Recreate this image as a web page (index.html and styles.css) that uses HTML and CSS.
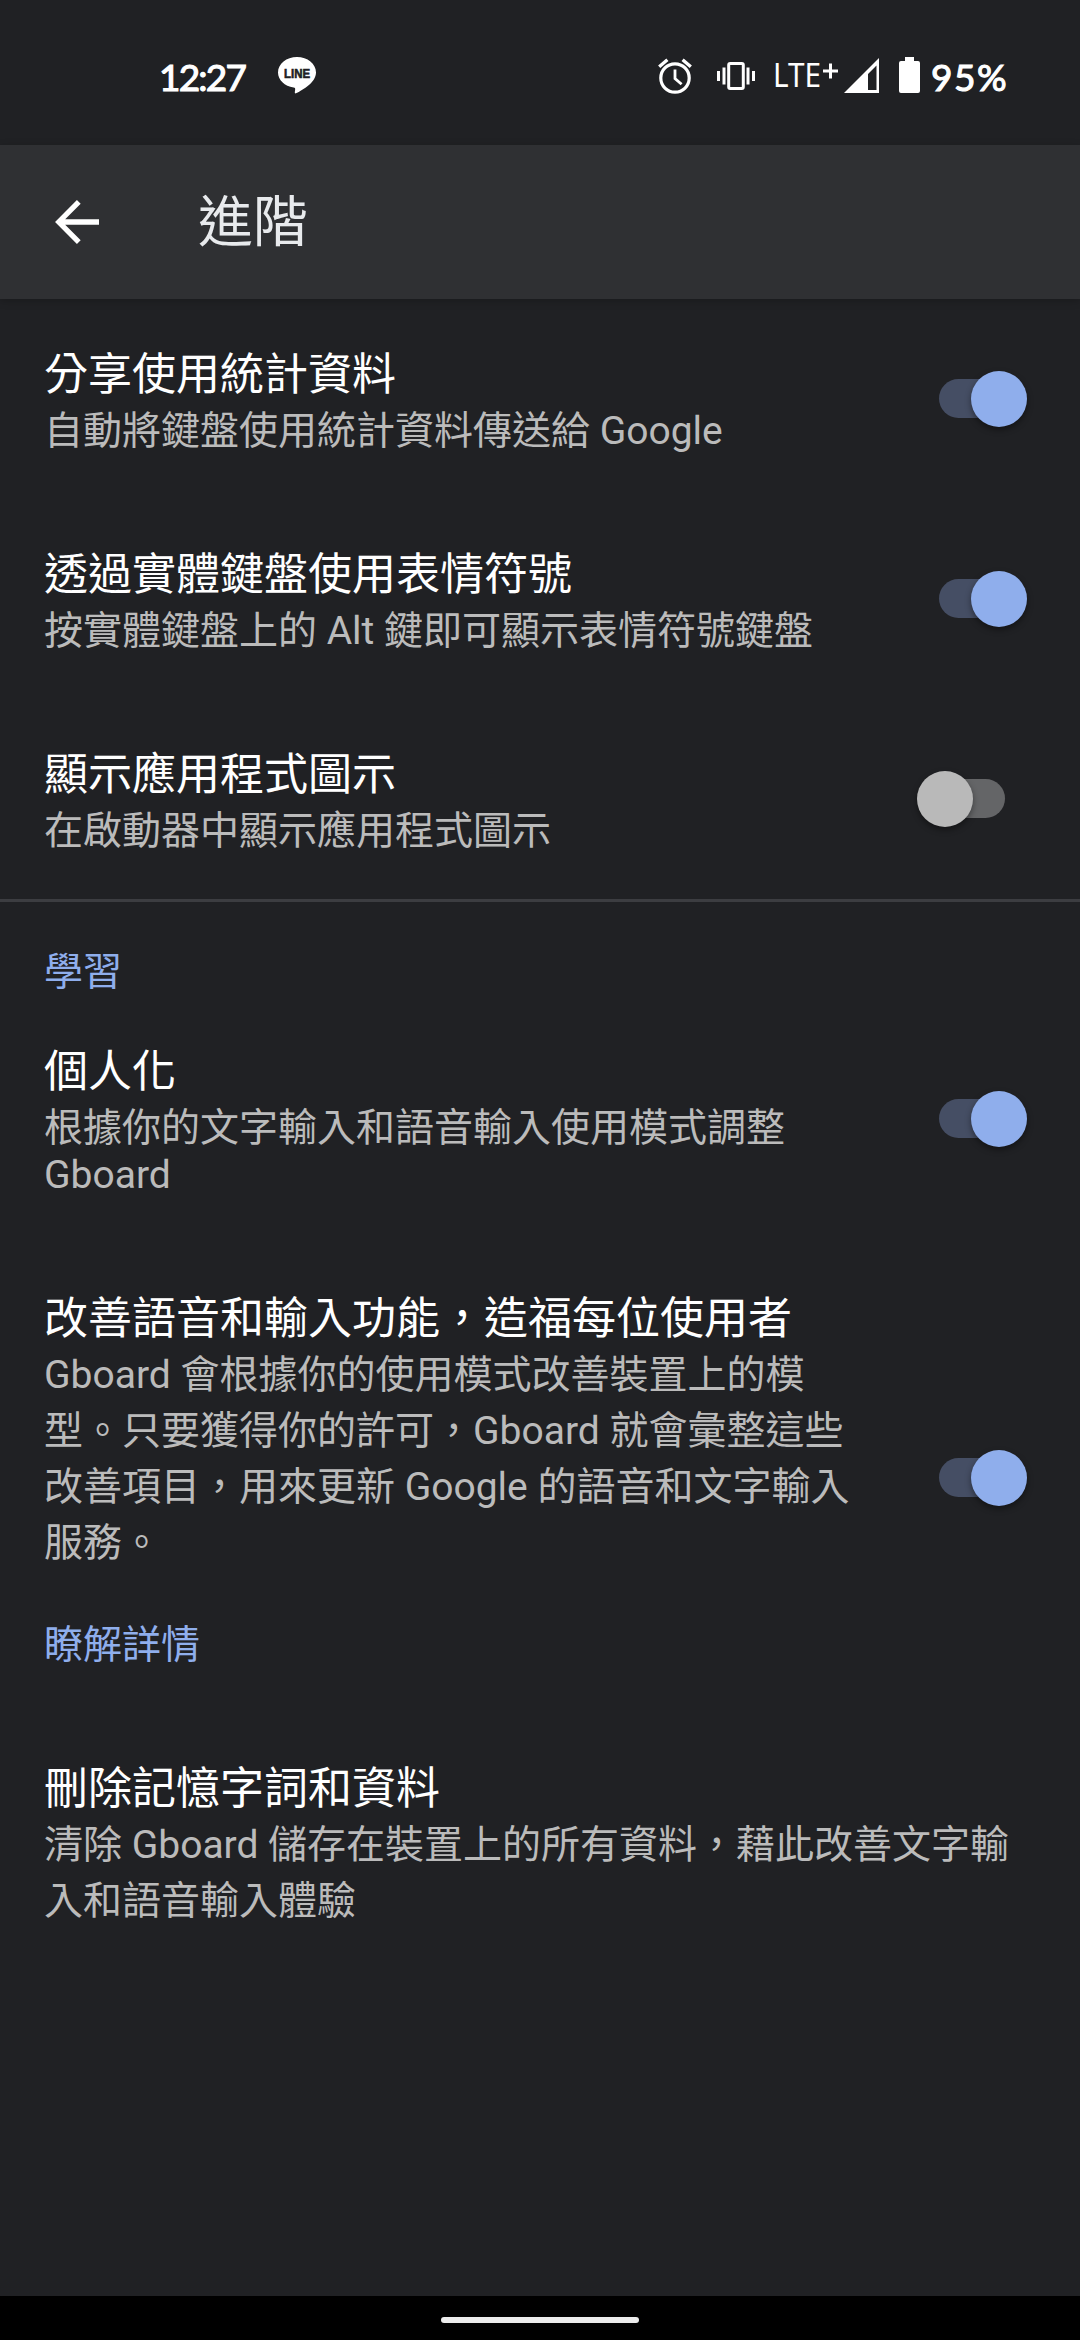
FILE: index.html
```html
<!DOCTYPE html>
<html lang="zh-Hant-TW">
<head>
<meta charset="utf-8">
<title>進階</title>
<link rel="stylesheet" href="styles.css">
</head>
<body>
<div class="status">
  <span class="clock">12:27</span>
  <svg class="line-icon" width="38" height="37" viewBox="0 0 38 37">
    <path fill="#fff" d="M19 0C8.500 0 0 6.800 0 15.500c0 7.600 6.700 13.600 15.600 15 1.600.3 1.700.8 1.500 2.400l-.3 2.300c-.1 1.100.6 1.500 1.700.9C25 32.700 38 25.500 38 15.500 38 6.800 29.500 0 19 0z"/>
    <text class="line-word" x="6" y="20.500" textLength="26" lengthAdjust="spacingAndGlyphs">LINE</text>
  </svg>
  <span class="spacer"></span>
  <svg class="alarm" width="34" height="36" viewBox="0 0 34 36" fill="none" stroke="#fff">
    <circle cx="17" cy="20" r="14.200" stroke-width="3.200"/>
    <path stroke-width="3.400" d="M1.200 8.700 9.400 1.800M32.800 8.700 24.600 1.800"/>
    <path stroke-width="2.800" d="M17 11.500v9l6.600 5.800"/>
  </svg>
  <svg class="vibrate" width="38" height="28" viewBox="0 0 38 28" fill="none" stroke="#fff" stroke-width="3">
    <rect x="11.700" y="1.500" width="14.600" height="25" rx="1.500"/>
    <path d="M7 5.500v17M31 5.500v17M1.500 9v10M36.500 9v10"/>
  </svg>
  <svg class="lte" width="69" height="46" viewBox="-5 -8 69 46">
    <text class="lte-word" x="-2" y="30" textLength="48" lengthAdjust="spacingAndGlyphs">LTE</text>
    <path stroke="#fff" stroke-width="3" d="M48 14h15M55.500 6.500v15"/>
  </svg>
  <svg class="signal" width="35" height="35" viewBox="0 0 35 35">
    <path fill="#fff" fill-rule="evenodd" d="M35 0v35H0zM32.500 7.500 24 16v16h8.500z"/>
  </svg>
  <svg class="battery" width="21" height="36" viewBox="0 0 21 36">
    <path fill="#fff" d="M6 0h9v4h4a2 2 0 0 1 2 2v28a2 2 0 0 1-2 2H2a2 2 0 0 1-2-2V6a2 2 0 0 1 2-2h4z"/>
  </svg>
  <span class="percent">95%</span>
</div>

<header class="appbar">
  <svg class="back" width="44" height="44" viewBox="0 0 44 44">
    <path fill="none" stroke="#fff" stroke-width="5.300" d="M44 22H4M23.800 1.900 3.800 22l20 20.100"/>
  </svg>
  <h1>進階</h1>
</header>

<main>
  <section class="row">
    <div class="text">
      <h2>分享使用統計資料</h2>
      <p>自動將鍵盤使用統計資料傳送給 Google</p>
    </div>
    <span class="switch on"></span>
  </section>
  <section class="row">
    <div class="text">
      <h2>透過實體鍵盤使用表情符號</h2>
      <p>按實體鍵盤上的 Alt 鍵即可顯示表情符號鍵盤</p>
    </div>
    <span class="switch on"></span>
  </section>
  <section class="row">
    <div class="text">
      <h2>顯示應用程式圖示</h2>
      <p>在啟動器中顯示應用程式圖示</p>
    </div>
    <span class="switch"></span>
  </section>
  <hr>
  <h3>學習</h3>
  <section class="row">
    <div class="text">
      <h2>個人化</h2>
      <p>根據你的文字輸入和語音輸入使用模式調整</p>
      <p class="latin">Gboard</p>
    </div>
    <span class="switch on"></span>
  </section>
  <section class="row">
    <div class="text">
      <h2>改善語音和輸入功能，造福每位使用者</h2>
      <p>Gboard 會根據你的使用模式改善裝置上的模<br>型。只要獲得你的許可，Gboard 就會彙整這些<br>改善項目，用來更新 Google 的語音和文字輸入<br>服務。</p>
      <p class="link">瞭解詳情</p>
    </div>
    <span class="switch on"></span>
  </section>
  <section class="row">
    <div class="text">
      <h2>刪除記憶字詞和資料</h2>
      <p>清除 Gboard 儲存在裝置上的所有資料，藉此改善文字輸<br>入和語音輸入體驗</p>
    </div>
  </section>
</main>

<nav class="navbar"><span class="pill"></span></nav>
</body>
</html>
```
FILE: styles.css
```css
* { box-sizing: border-box; margin: 0; padding: 0; }

body {
  width: 1080px;
  height: 2340px;
  overflow: hidden;
  display: flex;
  flex-direction: column;
  background: #202124;
  color: #fff;
  font-family: Roboto, "Noto Sans CJK TC", sans-serif;
}

svg { display: block; flex: none; overflow: visible; }

.status {
  height: 145px;
  flex: none;
  display: flex;
  align-items: flex-start;
  padding: 57px 73px 0 159px;
}
.clock, .percent {
  font: 400 37px/40px Lato, Roboto, sans-serif;
  -webkit-text-stroke: 1.1px #fff;
  white-space: nowrap;
}
.clock { width: 119px; letter-spacing: -1.8px; }
.percent { width: 76px; letter-spacing: 1.6px; }
.spacer { flex: 1; }
.line-word { font: 700 12.500px "Liberation Sans", sans-serif; fill: #202124; stroke: #202124; stroke-width: .6; }
.alarm { margin-top: 1px; margin-right: 25px; }
.vibrate { margin-top: 5px; margin-right: 15px; }
.lte { margin-top: -8px; margin-right: 5px; }
.lte-word { font: 400 33px "Noto Sans", sans-serif; fill: #fff; }
.signal { margin-top: 1px; margin-right: 20px; }
.battery { margin-right: 11px; }

.appbar {
  height: 154px;
  flex: none;
  display: flex;
  align-items: center;
  padding-left: 55px;
  background: #2f3033;
  box-shadow: 0 2px 8px rgba(0, 0, 0, .22);
}
.appbar h1 {
  margin-left: 99px;
  font-size: 55px;
  font-weight: 400;
  line-height: 80px;
  color: #e8eaed;
}

main { flex: 1; }

.row {
  display: flex;
  align-items: center;
  justify-content: space-between;
  padding: 0 54px 0 44px;
}
.text { padding: 47px 0 40px; white-space: nowrap; }
h2 { margin-bottom: -1px; font-size: 44px; font-weight: 400; line-height: 58px; }
p { font-size: 39px; line-height: 56px; color: #bbb; }
p.latin { line-height: 38px; padding-bottom: 9px; }
p.link { margin-top: 46px; color: #8faeec; }

hr { height: 3px; border: 0; background: #3c3d41; }
h3 {
  height: 94px;
  padding: 42px 0 0 44px;
  font-size: 39px;
  font-weight: 400;
  line-height: 56px;
  color: #8faeec;
}

.switch {
  position: relative;
  flex: none;
  width: 66px;
  height: 39px;
  margin: 0 21px 2px 0;
  border-radius: 20px;
  background: #646567;
}
.switch::after {
  content: "";
  position: absolute;
  left: -22px;
  top: -8px;
  width: 56px;
  height: 56px;
  border-radius: 50%;
  background: #b9b9b9;
  box-shadow: 0 3px 6px rgba(0, 0, 0, .4);
}
.switch.on { background: #454e64; }
.switch.on::after { left: 32px; background: #8faeec; }

.navbar {
  height: 44px;
  flex: none;
  display: flex;
  justify-content: center;
  padding-top: 21px;
  background: #000;
}
.pill { width: 198px; height: 6px; border-radius: 3px; background: #ececec; }
```
